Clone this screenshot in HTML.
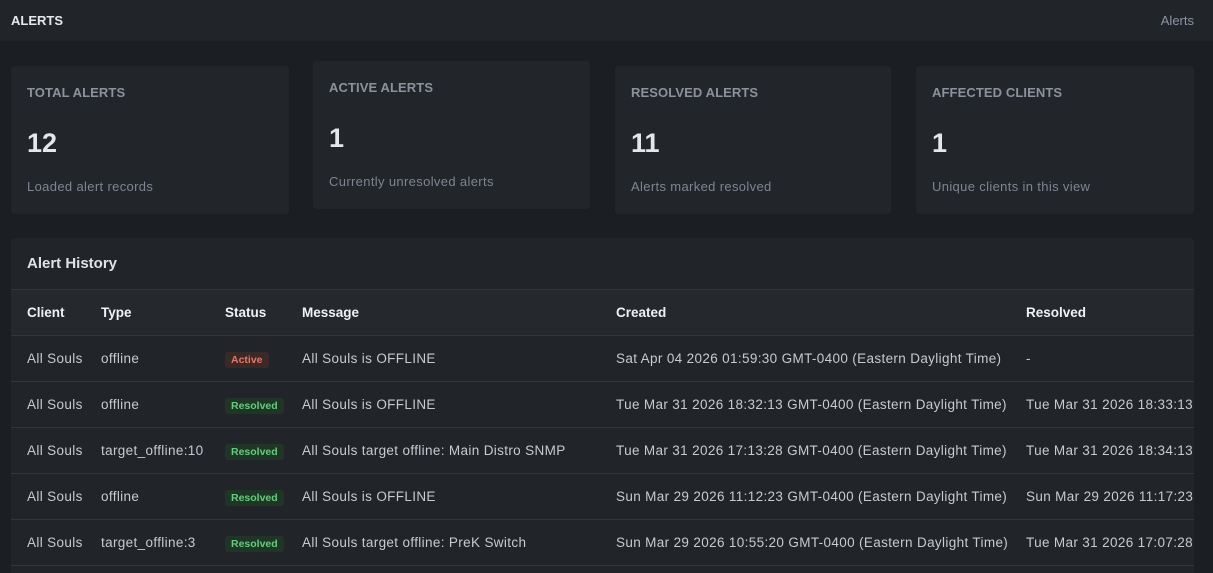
<!DOCTYPE html>
<html><head><meta charset="utf-8">
<style>
*{margin:0;padding:0;box-sizing:border-box}
body{width:1213px;height:573px;overflow:hidden;background:#1b1e22;font-family:"Liberation Sans",sans-serif;position:relative;color:#c9ccd1}
.top{position:absolute;left:0;top:0;width:1213px;height:41px;background:#212429}
.top .t{position:absolute;left:11px;top:13px;font-size:13px;font-weight:bold;color:#e6e8eb}
.top .r{position:absolute;right:19px;top:13px;font-size:13px;color:#8d95a3}
.card{position:absolute;width:278px;height:148px;background:#22252a;border-radius:4px}
.card .l{position:absolute;left:16px;top:19px;font-size:13px;font-weight:bold;color:#8c929c;letter-spacing:0.1px}
.card .n{position:absolute;left:16px;top:62px;font-size:27px;font-weight:bold;color:#e3e6ea}
.card .s{position:absolute;left:16px;top:113px;font-size:13px;color:#7f8590;letter-spacing:0.35px}
.panel{position:absolute;left:11px;top:238px;width:1183px;height:335px;background:#212429;border-radius:4px 4px 0 0;overflow:hidden}
.panel .h{position:absolute;left:16px;top:17px;font-size:15px;font-weight:bold;color:#dfe2e6}
.row{position:absolute;left:0;width:1183px;height:46px;border-top:1px solid #32363c;font-size:13.5px;color:#c7cacf;white-space:nowrap;letter-spacing:0.35px}
.row.hd{background:#25282d;font-weight:bold;color:#f0f1f3;letter-spacing:0}
.row span{position:absolute;top:15px}
.b{font-size:10.5px;font-weight:bold;padding:2px 6px;border-radius:3px;top:16px!important;letter-spacing:0}
.act{background:#3a2927;color:#e9775f}
.res{background:#213527;color:#5fcf7a}
</style></head><body>
<div class="top"><div class="t">ALERTS</div><div class="r">Alerts</div></div>
<div class="card" style="left:11px;top:66px"><div class="l">TOTAL ALERTS</div><div class="n">12</div><div class="s">Loaded alert records</div></div>
<div class="card" style="left:313px;top:61px;width:277px"><div class="l">ACTIVE ALERTS</div><div class="n">1</div><div class="s">Currently unresolved alerts</div></div>
<div class="card" style="left:615px;top:66px;width:276px"><div class="l">RESOLVED ALERTS</div><div class="n">11</div><div class="s">Alerts marked resolved</div></div>
<div class="card" style="left:916px;top:66px;width:278px"><div class="l">AFFECTED CLIENTS</div><div class="n">1</div><div class="s">Unique clients in this view</div></div>
<div class="panel">
<div class="h">Alert History</div>
<div class="row hd" style="top:51px"><span style="left:16px">Client</span><span style="left:90px">Type</span><span style="left:214px">Status</span><span style="left:291px">Message</span><span style="left:605px">Created</span><span style="left:1015px">Resolved</span></div>
<div class="row" style="top:97px"><span style="left:16px">All Souls</span><span style="left:90px">offline</span><span class="b act" style="left:214px">Active</span><span style="left:291px">All Souls is OFFLINE</span><span style="left:605px">Sat Apr 04 2026 01:59:30 GMT-0400 (Eastern Daylight Time)</span><span style="left:1015px">-</span></div>
<div class="row" style="top:143px"><span style="left:16px">All Souls</span><span style="left:90px">offline</span><span class="b res" style="left:214px">Resolved</span><span style="left:291px">All Souls is OFFLINE</span><span style="left:605px">Tue Mar 31 2026 18:32:13 GMT-0400 (Eastern Daylight Time)</span><span style="left:1015px">Tue Mar 31 2026 18:33:13</span></div>
<div class="row" style="top:189px"><span style="left:16px">All Souls</span><span style="left:90px">target_offline:10</span><span class="b res" style="left:214px">Resolved</span><span style="left:291px">All Souls target offline: Main Distro SNMP</span><span style="left:605px">Tue Mar 31 2026 17:13:28 GMT-0400 (Eastern Daylight Time)</span><span style="left:1015px">Tue Mar 31 2026 18:34:13</span></div>
<div class="row" style="top:235px"><span style="left:16px">All Souls</span><span style="left:90px">offline</span><span class="b res" style="left:214px">Resolved</span><span style="left:291px">All Souls is OFFLINE</span><span style="left:605px">Sun Mar 29 2026 11:12:23 GMT-0400 (Eastern Daylight Time)</span><span style="left:1015px">Sun Mar 29 2026 11:17:23</span></div>
<div class="row" style="top:281px"><span style="left:16px">All Souls</span><span style="left:90px">target_offline:3</span><span class="b res" style="left:214px">Resolved</span><span style="left:291px">All Souls target offline: PreK Switch</span><span style="left:605px">Sun Mar 29 2026 10:55:20 GMT-0400 (Eastern Daylight Time)</span><span style="left:1015px">Tue Mar 31 2026 17:07:28</span></div>
<div class="row" style="top:327px"></div>
</div>
</body></html>
